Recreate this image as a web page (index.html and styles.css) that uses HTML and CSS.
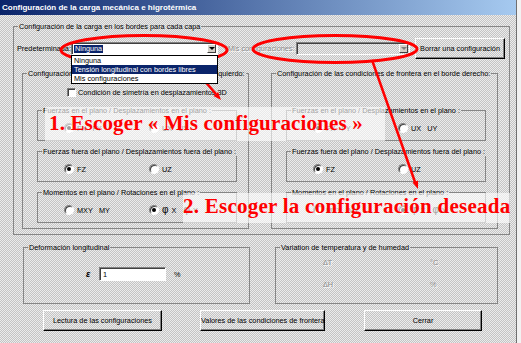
FILE: index.html
```html
<!DOCTYPE html>
<html lang="es">
<head>
    <meta charset="UTF-8">
    <title>Configuración de la carga mecánica e higrotérmica</title>
    <link rel="stylesheet" href="styles.css">
</head>
<body>
    <div class="window">
        <div class="titlebar">Configuración de la carga mecánica e higrotérmica</div>
        <div class="main">
            <fieldset class="group outer">
                <legend>Configuración de la carga en los bordes para cada capa</legend>
                <div class="preset-row">
                    <span class="lbl lbl-preset">Predeterminada:</span>
                    <div class="combo combo-preset">
                        <span class="combo-value"><span class="selected">Ninguna</span></span>
                        <span class="combo-btn"><span class="arrow"></span></span>
                        <ul class="combo-list">
                            <li>Ninguna</li>
                            <li class="hl">Tensión longitudinal con bordes libres</li>
                            <li>Mis configuraciones</li>
                        </ul>
                    </div>
                    <span class="lbl lbl-mine disabled">Mis configuraciones:</span>
                    <div class="combo combo-mine off">
                        <span class="combo-value"></span>
                        <span class="combo-btn"><span class="arrow"></span></span>
                    </div>
                    <button class="btn btn-delete">Borrar una configuración</button>
                </div>

                <div class="edges">
                    <fieldset class="group edge">
                        <legend>Configuración de las condiciones de frontera en el borde izquierdo:</legend>
                        <div class="edge-body">
                            <div class="check"><span class="box"></span>Condición de simetría en desplazamientos 3D</div>
                            <fieldset class="group sub">
                                <legend>Fuerzas en el plano / Desplazamientos en el plano :</legend>
                                <div class="radios">
                                    <span class="opt"><span class="radio on"></span>FX&nbsp;&nbsp;&nbsp;FY</span>
                                    <span class="opt"><span class="radio"></span>UX&nbsp;&nbsp;&nbsp;UY</span>
                                </div>
                            </fieldset>
                            <fieldset class="group sub">
                                <legend>Fuerzas fuera del plano / Desplazamientos fuera del plano :</legend>
                                <div class="radios">
                                    <span class="opt"><span class="radio on"></span>FZ</span>
                                    <span class="opt"><span class="radio"></span>UZ</span>
                                </div>
                            </fieldset>
                            <fieldset class="group sub">
                                <legend>Momentos en el plano / Rotaciones en el plano :</legend>
                                <div class="radios">
                                    <span class="opt"><span class="radio"></span>MXY&nbsp;&nbsp;&nbsp;MY</span>
                                    <span class="opt"><span class="radio on"></span><span class="phi">φ</span>X&nbsp;&nbsp;<span class="phi">φ</span>Y</span>
                                </div>
                            </fieldset>
                        </div>
                    </fieldset>

                    <fieldset class="group edge">
                        <legend>Configuración de las condiciones de frontera en el borde derecho:</legend>
                        <div class="edge-body">
                            <fieldset class="group sub">
                                <legend>Fuerzas en el plano / Desplazamientos en el plano :</legend>
                                <div class="radios">
                                    <span class="opt"><span class="radio on"></span>FX&nbsp;&nbsp;&nbsp;FY</span>
                                    <span class="opt"><span class="radio"></span>UX&nbsp;&nbsp;&nbsp;UY</span>
                                </div>
                            </fieldset>
                            <fieldset class="group sub">
                                <legend>Fuerzas fuera del plano / Desplazamientos fuera del plano :</legend>
                                <div class="radios">
                                    <span class="opt"><span class="radio on"></span>FZ</span>
                                    <span class="opt"><span class="radio"></span>UZ</span>
                                </div>
                            </fieldset>
                            <fieldset class="group sub">
                                <legend>Momentos en el plano / Rotaciones en el plano :</legend>
                                <div class="radios">
                                    <span class="opt"><span class="radio"></span>MXY&nbsp;&nbsp;&nbsp;MY</span>
                                    <span class="opt"><span class="radio on"></span><span class="phi">φ</span>X&nbsp;&nbsp;<span class="phi">φ</span>Y</span>
                                </div>
                            </fieldset>
                        </div>
                    </fieldset>
                </div>
            </fieldset>

            <div class="bottom-groups">
                <fieldset class="group strain">
                    <legend>Deformación longitudinal</legend>
                    <div class="strain-row">
                        <span class="eps">ε</span>
                        <span class="field">1</span>
                        <span class="unit">%</span>
                    </div>
                </fieldset>
                <fieldset class="group hygro">
                    <legend>Variation de temperatura y de humedad</legend>
                    <div class="hygro-grid disabled">
                        <span>ΔT</span><span>°C</span>
                        <span>ΔH</span><span>%</span>
                    </div>
                </fieldset>
            </div>

            <div class="buttons">
                <button class="btn btn-read">Lectura de las configuraciones</button>
                <button class="btn btn-values">Valores de las condiciones de frontera</button>
                <button class="btn btn-close">Cerrar</button>
            </div>
        </div>

        <!-- annotations drawn over the dialog -->
        <div class="note note-1">1. Escoger « Mis configuraciones »</div>
        <div class="note note-2">2. Escoger la configuración deseada</div>
        <svg class="marks" width="521" height="343" viewBox="0 0 521 343">
            <ellipse cx="144" cy="50" rx="83" ry="14.5" fill="none" stroke="#f00" stroke-width="3"/>
            <ellipse cx="335" cy="49" rx="82" ry="13.5" fill="none" stroke="#f00" stroke-width="3"/>
            <line x1="189" y1="63" x2="216" y2="94" stroke="#f00" stroke-width="2.5"/>
            <polygon points="221,100 213.5,95.9 218.1,91.9" fill="#f00"/>
            <line x1="372" y1="60" x2="415" y2="182" stroke="#f00" stroke-width="2.5"/>
            <polygon points="418,189 412.5,182.5 418.1,180.5" fill="#f00"/>
        </svg>
    </div>
</body>
</html>
```

FILE: styles.css
```css
body {
    margin: 0;
    background: #f2f2f2;
    font-family: "Liberation Sans", Arial, sans-serif;
    font-size: 7.3px;
    color: #000;
}
.window {
    position: relative;
    width: 516px;
    height: 343px;
    border-right: 1px solid #707070;
    background: repeating-conic-gradient(#c4c4c4 0 25%, #ececec 0 50%) 0 0 / 2px 2px;
    overflow: hidden;
}
.titlebar {
    height: 15px;
    line-height: 15px;
    padding-left: 2px;
    color: #fff;
    font-weight: bold;
    font-size: 8px;
    background: linear-gradient(90deg, #0a246a, #a6caf0);
}
.main {
    padding: 7px 0 0 13px;
}
.group {
    margin: 0;
    padding: 0;
    min-width: 0;
    box-sizing: border-box;
    border: 1px solid #858585;
}
.group legend {
    margin-left: 4px;
    padding: 0 1px;
    line-height: 9px;
    white-space: nowrap;
}
.disabled {
    color: #8a8a8a;
    text-shadow: 1px 1px 0 #fff;
}

/* outer frame */
.outer {
    width: 497px;
    height: 213px;
}
.preset-row {
    display: flex;
    align-items: center;
    margin-top: 7px;
    padding-left: 3px;
    height: 21px;
}
.lbl-preset {
    width: 54px;
}
.lbl-mine {
    width: 68px;
    margin-left: 10px;
}
.combo {
    position: relative;
    display: flex;
    height: 13px;
    box-sizing: border-box;
    border: 1px solid;
    border-color: #808080 #fff #fff #808080;
    box-shadow: inset 1px 1px 0 #404040;
    background: #fff;
}
.combo.off {
    background: transparent;
}
.combo-preset {
    width: 147px;
}
.combo-mine {
    width: 114px;
}
.combo-value {
    flex: 1;
    padding: 2px 0 0 2px;
    line-height: 8px;
}
.selected {
    display: inline-block;
    padding: 0 1px;
    background: #0a246a;
    color: #fff;
}
.combo-btn {
    width: 9px;
    margin: 1px 1px 0 0;
    height: 9px;
    box-sizing: border-box;
    border: 1px solid;
    border-color: #fff #404040 #404040 #fff;
    background: #d4d0c8;
    display: flex;
    align-items: center;
    justify-content: center;
}
.arrow {
    width: 0;
    height: 0;
    border-left: 3px solid transparent;
    border-right: 3px solid transparent;
    border-top: 3px solid #000;
}
.off .arrow {
    border-top-color: #808080;
}
.combo-list {
    position: absolute;
    top: 12px;
    left: -1px;
    width: 147px;
    box-sizing: border-box;
    margin: 0;
    padding: 0;
    list-style: none;
    background: #fff;
    border: 1px solid #000;
    z-index: 5;
}
.combo-list li {
    height: 9px;
    line-height: 9px;
    padding-left: 2px;
    white-space: nowrap;
}
.combo-list li.hl {
    background: #0a246a;
    color: #fff;
}

.btn {
    margin: 0;
    padding: 0;
    height: 21px;
    box-sizing: border-box;
    font: inherit;
    color: #000;
    white-space: nowrap;
    overflow: hidden;
    background: transparent;
    border: 1px solid;
    border-color: #fff #000 #000 #fff;
    box-shadow: inset -1px -1px 0 #808080;
}
.btn-delete {
    width: 90px;
    margin-left: 5px;
}

/* left and right edges */
.edges {
    display: flex;
    gap: 22px;
    margin-top: 10px;
    padding-left: 8px;
}
.edge {
    width: 227px;
    height: 160px;
}
.edge-body {
    height: 150px;
    display: flex;
    flex-direction: column;
    justify-content: flex-end;
    padding: 0 0 5px 14px;
    box-sizing: border-box;
}
.check {
    display: flex;
    align-items: center;
    gap: 2px;
    margin: 0 0 9px 30px;
    height: 10px;
}
.box {
    width: 9px;
    height: 9px;
    box-sizing: border-box;
    border: 1px solid;
    border-color: #808080 #fff #fff #808080;
    box-shadow: inset 1px 1px 0 #404040;
    background: #fff;
}
.sub {
    width: 200px;
    height: 35px;
}
.sub + .sub {
    margin-top: 6px;
}
.radios {
    display: grid;
    grid-template-columns: 85px 1fr;
    padding: 8px 0 0 26px;
}
.opt {
    display: flex;
    align-items: center;
    gap: 3px;
    height: 10px;
}
.radio {
    position: relative;
    width: 10px;
    height: 10px;
    box-sizing: border-box;
    border-radius: 50%;
    border: 1px solid;
    border-color: #808080 #fff #fff #808080;
    box-shadow: inset 1px 1px 0 #404040;
    background: #fff;
}
.radio.on::after {
    content: "";
    position: absolute;
    left: 2px;
    top: 2px;
    width: 4px;
    height: 4px;
    border-radius: 50%;
    background: #000;
}
.phi {
    font-size: 10px;
    line-height: 8px;
}

/* bottom frames */
.bottom-groups {
    display: flex;
    gap: 25px;
    margin: 8px 0 0 10px;
}
.strain {
    width: 227px;
    height: 61px;
}
.hygro {
    width: 223px;
    height: 61px;
}
.strain-row {
    display: flex;
    align-items: center;
    height: 14px;
    padding: 15px 0 0 62px;
}
.eps {
    width: 13px;
    font-style: italic;
    font-weight: bold;
    font-size: 9px;
}
.field {
    width: 67px;
    height: 14px;
    box-sizing: border-box;
    padding: 2px 0 0 3px;
    border: 1px solid;
    border-color: #808080 #fff #fff #808080;
    box-shadow: inset 1px 1px 0 #404040;
    background: #fff;
    line-height: 9px;
}
.unit {
    margin-left: 8px;
}
.hygro-grid {
    display: grid;
    grid-template-columns: 107px 1fr;
    row-gap: 13px;
    padding: 6px 0 0 47px;
    line-height: 9px;
}

.buttons {
    display: flex;
    gap: 38px;
    margin: 6px 0 0 30px;
}
.btn-read {
    width: 119px;
}
.btn-values {
    width: 125px;
}
.btn-close {
    width: 118px;
    margin-left: 1px;
}

/* annotations */
.note {
    position: absolute;
    box-sizing: border-box;
    background: rgba(255, 255, 255, 0.62);
    color: #f00;
    font-family: "Liberation Serif", "Times New Roman", serif;
    font-weight: bold;
    font-size: 21px;
    letter-spacing: 0.15px;
    white-space: nowrap;
}
.note-1 {
    left: 45px;
    top: 107px;
    width: 340px;
    height: 34px;
    padding: 4px 0 0 4px;
}
.note-2 {
    left: 183px;
    top: 193px;
    width: 327px;
    height: 30px;
    padding: 1px 0 0 0;
    letter-spacing: 0.25px;
}
.marks {
    position: absolute;
    top: 0;
    left: 0;
    pointer-events: none;
}
```
